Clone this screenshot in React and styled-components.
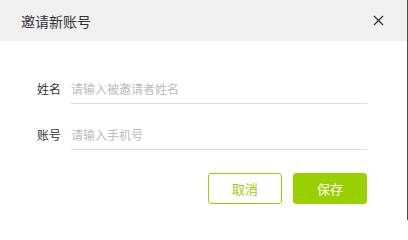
import React, { useState } from "react";
import styled, { createGlobalStyle } from "styled-components";

const GlobalStyle = createGlobalStyle`
  html, body {
    margin: 0;
    padding: 0;
    background: #fff;
  }
  body {
    font-family: "Noto Sans CJK SC", "Noto Sans", sans-serif;
  }
`;

const Dialog = styled.div`
  box-sizing: border-box;
  width: 408px;
  height: 220px;
  background: #fff;
  border-right: 1px solid #4d4d4d;
  display: flex;
  flex-direction: column;
`;

const Header = styled.div`
  height: 41px;
  background: #f0f0f0;
  display: flex;
  justify-content: space-between;
  align-items: center;
  padding: 0 22px 0 21px;
`;

const Title = styled.h2`
  margin: 0;
  font-size: 14px;
  font-weight: 400;
  color: #333;
`;

const CloseButton = styled.button`
  width: 14px;
  height: 14px;
  padding: 0;
  border: none;
  background: none;
  cursor: pointer;
  display: flex;
  align-items: center;
  justify-content: center;
`;

const Form = styled.form`
  display: flex;
  flex-direction: column;
  gap: 15px;
  padding: 32px 40px 0 36px;
`;

const Row = styled.div`
  display: flex;
  align-items: center;
  gap: 10px;
`;

const Label = styled.label`
  width: 25px;
  text-align: right;
  font-size: 12px;
  color: #333;
  flex-shrink: 0;
`;

const Input = styled.input`
  flex: 1;
  height: 30px;
  padding: 0;
  border: none;
  border-bottom: 1px solid #dcdcdc;
  font-family: inherit;
  font-size: 12px;
  color: #333;
  outline: none;

  &::placeholder {
    color: #bbb;
  }
`;

const Footer = styled.div`
  display: flex;
  justify-content: flex-end;
  gap: 11px;
  margin-top: 23px;
  padding-right: 40px;
`;

const Button = styled.button`
  width: 74px;
  height: 31px;
  border-radius: 3px;
  border: 1px solid #99d100;
  background: ${(p) => (p.$primary ? "#99d100" : "#fff")};
  color: ${(p) => (p.$primary ? "#fff" : "#99d100")};
  font-family: inherit;
  font-size: 13px;
  cursor: pointer;
`;

const App = () => {
  const [name, setName] = useState("");
  const [phone, setPhone] = useState("");

  return (
    <>
      <GlobalStyle />
      <Dialog>
        <Header>
          <Title>邀请新账号</Title>
          <CloseButton aria-label="close">
            <svg width="11" height="11" viewBox="0 0 11 11">
              <path d="M1 1L10 10M10 1L1 10" stroke="#333" strokeWidth="1.3" />
            </svg>
          </CloseButton>
        </Header>

        <Form onSubmit={(e) => e.preventDefault()}>
          <Row>
            <Label>姓名</Label>
            <Input
              placeholder="请输入被邀请者姓名"
              value={name}
              onChange={(e) => setName(e.target.value)}
            />
          </Row>
          <Row>
            <Label>账号</Label>
            <Input
              placeholder="请输入手机号"
              value={phone}
              onChange={(e) => setPhone(e.target.value)}
            />
          </Row>
        </Form>

        <Footer>
          <Button type="button">取消</Button>
          <Button type="button" $primary>
            保存
          </Button>
        </Footer>
      </Dialog>
    </>
  );
};

export default App;
